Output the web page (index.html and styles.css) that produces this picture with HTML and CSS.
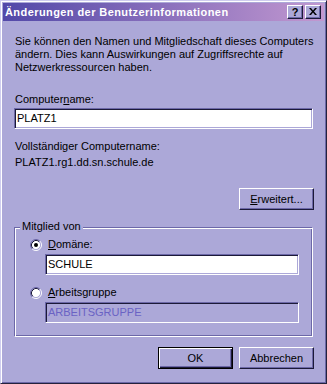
FILE: index.html
```html
<!DOCTYPE html>
<html lang="de">
<head>
<meta charset="utf-8">
<title>Änderungen der Benutzerinformationen</title>
<link rel="stylesheet" href="styles.css">
</head>
<body>
<div class="window">
  <div class="titlebar">
    <span class="title">Änderungen der Benutzerinformationen</span>
    <div class="tbtns">
      <span class="tbtn help">?</span>
      <span class="tbtn close"><svg width="8" height="7" viewBox="0 0 8 7"><path d="M0 0h2l2 2.5L6 0h2L5 3.5 8 7H6L4 4.5 2 7H0l3-3.5z" fill="#000"/></svg></span>
    </div>
  </div>
  <div class="content">
    <p class="intro">Sie können den Namen und Mitgliedschaft dieses Computers<br>ändern. Dies kann Auswirkungen auf Zugriffsrechte auf<br>Netzwerkressourcen haben.</p>
    <div class="lbl lbl-cn">Computer<u>n</u>ame:</div>
    <div class="field field-cn">PLATZ1</div>
    <div class="lbl lbl-full">Vollständiger Computername:</div>
    <div class="lbl lbl-fqdn">PLATZ1.rg1.dd.sn.schule.de</div>
    <div class="row-right"><span class="btn"><u>E</u>rweitert...</span></div>
    <div class="group">
      <span class="legend">Mitglied von</span>
      <div class="radio-row">
        <svg class="radio" width="12" height="12" viewBox="0 0 12 12">
          <circle cx="6" cy="6" r="4.5" fill="#fff"/>
          <path d="M2.11 9.89A5.5 5.5 0 0 1 9.89 2.11" stroke="#6c68a8" fill="none"/>
          <path d="M9.89 2.11A5.5 5.5 0 0 1 2.11 9.89" stroke="#fff" fill="none"/>
          <path d="M2.82 9.18A4.5 4.5 0 0 1 9.18 2.82" stroke="#1c1a38" fill="none"/>
          <path d="M9.18 2.82A4.5 4.5 0 0 1 2.82 9.18" stroke="#aca8d8" fill="none"/>
          <circle cx="6" cy="6" r="2" fill="#000"/>
        </svg>
        <span><u>D</u>omäne:</span>
      </div>
      <div class="field indent f1">SCHULE</div>
      <div class="radio-row r2">
        <svg class="radio" width="12" height="12" viewBox="0 0 12 12">
          <circle cx="6" cy="6" r="4.5" fill="#fff"/>
          <path d="M2.11 9.89A5.5 5.5 0 0 1 9.89 2.11" stroke="#6c68a8" fill="none"/>
          <path d="M9.89 2.11A5.5 5.5 0 0 1 2.11 9.89" stroke="#fff" fill="none"/>
          <path d="M2.82 9.18A4.5 4.5 0 0 1 9.18 2.82" stroke="#1c1a38" fill="none"/>
          <path d="M9.18 2.82A4.5 4.5 0 0 1 2.82 9.18" stroke="#aca8d8" fill="none"/>
        </svg>
        <span><u>A</u>rbeitsgruppe</span>
      </div>
      <div class="field indent disabled">ARBEITSGRUPPE</div>
    </div>
    <div class="actions">
      <span class="btn default">OK</span>
      <span class="btn">Abbrechen</span>
    </div>
  </div>
</div>
</body>
</html>
```
FILE: styles.css
```css
html, body {
  margin: 0;
  padding: 0;
  background: #aca8d8;
}
body {
  font-family: "Liberation Sans", Arial, sans-serif;
  font-size: 11px;
  line-height: 13px;
  color: #000;
}
.window {
  width: 327px;
  height: 384px;
  box-sizing: border-box;
  background: #aca8d8;
  border: 1px solid;
  border-color: #cfcdef #24223c #24223c #cfcdef;
  box-shadow: inset 1px 1px #fff, inset -1px -1px #6c68a8;
  padding: 2px;
  display: flex;
  flex-direction: column;
}
.titlebar {
  height: 18px;
  flex: none;
  display: flex;
  align-items: center;
  justify-content: space-between;
  background: linear-gradient(to right, #5248a8, #c298d0);
  padding: 0 3px 0 2px;
}
.title {
  color: #fff;
  font-weight: bold;
  font-size: 11px;
  letter-spacing: 0.42px;
}
.tbtns {
  display: flex;
  gap: 2px;
}
.tbtn {
  width: 16px;
  height: 14px;
  box-sizing: border-box;
  background: #aca8d8;
  border: 1px solid;
  border-color: #fff #1c1a38 #1c1a38 #fff;
  box-shadow: inset -1px -1px #6c68a8;
  display: flex;
  align-items: center;
  justify-content: center;
  font-weight: bold;
  font-size: 11px;
  line-height: 12px;
}
.help {
  padding-bottom: 1px;
}
.close svg {
  display: block;
  margin-bottom: 1px;
}
.content {
  padding: 14px 10px 0 11px;
  display: flex;
  flex-direction: column;
}
.intro {
  margin: 0;
  padding-left: 1px;
}
.lbl {
  padding-left: 1px;
  height: 13px;
}
.lbl-cn { margin-top: 19px; }
.lbl-full { margin-top: 11px; }
.lbl-fqdn { margin-top: 3px; }
.field {
  height: 21px;
  box-sizing: border-box;
  background: #fff;
  border: 1px solid;
  border-color: #6c68a8 #fff #fff #6c68a8;
  box-shadow: inset 1px 1px #1c1a38, inset -1px -1px #aca8d8;
  padding-left: 2px;
  line-height: 19px;
  margin-right: 1px;
}
.field-cn { margin-top: 2px; }
.row-right {
  display: flex;
  justify-content: flex-end;
  margin-top: 19px;
}
.btn {
  width: 75px;
  height: 22px;
  box-sizing: border-box;
  border: 1px solid;
  border-color: #fff #1c1a38 #1c1a38 #fff;
  box-shadow: inset -1px -1px #6c68a8;
  display: flex;
  align-items: center;
  justify-content: center;
  background: #aca8d8;
}
.btn.default {
  border-color: #000;
  box-shadow: inset 1px 1px #fff, inset -1px -1px #1c1a38, inset -2px -2px #6c68a8;
}
.group {
  position: relative;
  margin-top: 17px;
  margin-right: 1px;
  height: 110px;
  box-sizing: border-box;
  border: 1px solid;
  border-color: #6c68a8 #fff #fff #6c68a8;
  box-shadow: inset 1px 1px #fff, inset -1px -1px #6c68a8;
  padding: 10px 13px 0 15px;
  display: flex;
  flex-direction: column;
}
.legend {
  position: absolute;
  top: -8px;
  left: 5px;
  padding: 0 2px;
  background: #aca8d8;
  height: 13px;
}
.radio-row {
  display: flex;
  align-items: center;
  gap: 6px;
  height: 13px;
}
.radio {
  display: block;
  flex: none;
}
.r2 { margin-top: 11px; }
.indent {
  margin-left: 15px;
  margin-right: 0;
  margin-top: 3px;
}
.disabled {
  background: #aca8d8;
  color: #6a62c4;
}
.actions {
  display: flex;
  justify-content: flex-end;
  gap: 6px;
  margin-top: 10px;
}
```
